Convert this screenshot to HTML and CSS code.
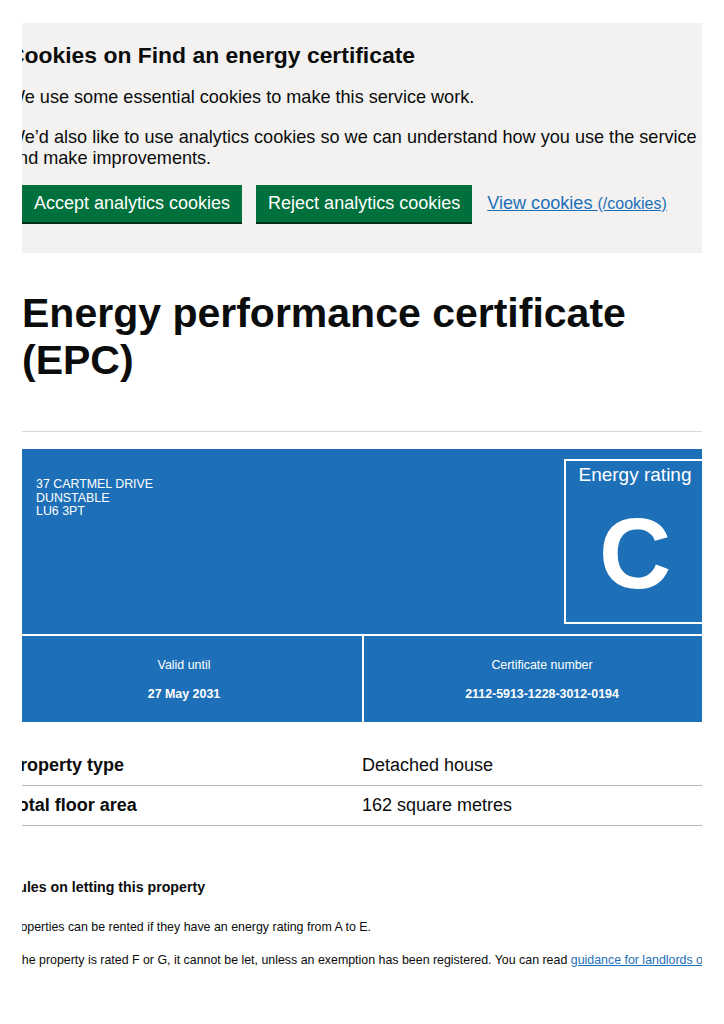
FILE: index.html
```html
<!DOCTYPE html>
<html lang="en">
<head>
<meta charset="utf-8">
<title>Energy performance certificate (EPC)</title>
<link rel="stylesheet" href="styles.css">
</head>
<body>
<div class="page">
  <div class="cookie-banner">
    <h2 class="cb-heading">Cookies on Find an energy certificate</h2>
    <p class="cb-text">We use some essential cookies to make this service work.</p>
    <p class="cb-text cb-text-last">We’d also like to use analytics cookies so we can understand how you use the service and make improvements.</p>
    <div class="cb-actions">
      <button class="btn" type="button">Accept analytics cookies</button>
      <button class="btn" type="button">Reject analytics cookies</button>
      <a class="cb-link" href="#">View cookies <span class="cb-link-small">(/cookies)</span></a>
    </div>
  </div>

  <main class="main">
    <h1 class="title">Energy performance certificate (EPC)</h1>
    <hr class="rule">

    <div class="epc">
      <div class="epc-top">
        <div class="epc-address">37 CARTMEL DRIVE<br>DUNSTABLE<br>LU6 3PT</div>
        <div class="epc-rating">
          <div class="epc-rating-label">Energy rating</div>
          <div class="epc-rating-letter">C</div>
        </div>
      </div>
      <div class="epc-cell">
        <div class="epc-cell-label">Valid until</div>
        <div class="epc-cell-value">27 May 2031</div>
      </div>
      <div class="epc-cell">
        <div class="epc-cell-label">Certificate number</div>
        <div class="epc-cell-value">2112-5913-1228-3012-0194</div>
      </div>
    </div>

    <dl class="summary">
      <div class="summary-row">
        <dt class="summary-key">Property type</dt>
        <dd class="summary-value">Detached house</dd>
      </div>
      <div class="summary-row">
        <dt class="summary-key">Total floor area</dt>
        <dd class="summary-value">162 square metres</dd>
      </div>
    </dl>

    <h2 class="rules-heading">Rules on letting this property</h2>
    <p class="rules-text">Properties can be rented if they have an energy rating from A to E.</p>
    <p class="rules-text rules-nowrap">If the property is rated F or G, it cannot be let, unless an exemption has been registered. You can read <a class="rules-link" href="#">guidance for landlords on the regulations and exemptions (opens in new tab)</a>.</p>
  </main>
</div>
</body>
</html>
```

FILE: styles.css
```css
html, body {
  margin: 0;
  padding: 0;
  background: #ffffff;
}

body {
  font-family: "Liberation Sans", Arial, sans-serif;
  color: #0b0c0c;
}

.page {
  width: 680px;
  margin: 23px 22px 0;
  overflow: hidden;
  padding-bottom: 40px;
}

/* Cookie banner */
.cookie-banner {
  background: #f3f2f1;
  padding: 19.5px 0 31px;
}

.cb-heading {
  margin: 0 0 19px -14px;
  font-size: 22.9px;
  line-height: 25px;
  font-weight: 700;
}

.cb-text {
  margin: 0 0 19px -14px;
  width: 708px;
  font-size: 18.1px;
  line-height: 21px;
}

.cb-text-last {
  margin-bottom: 16.5px;
}

.cb-actions {
  display: flex;
  align-items: center;
  gap: 14px;
  margin-top: 0;
}

.btn {
  font-family: "Liberation Sans", Arial, sans-serif;
  font-size: 18px;
  line-height: 19px;
  color: #ffffff;
  background: #00703c;
  border: 2px solid transparent;
  border-radius: 0;
  padding: 7px 10px 7px;
  box-shadow: 0 2px 0 #002d18;
  cursor: pointer;
  margin: 0;
}

.cb-link {
  margin-left: 1px;
  font-size: 18.1px;
  color: #1d70b8;
  text-decoration: underline;
}

.cb-link-small {
  font-size: 16px;
}

/* Main */
.main {
  padding-top: 37px;
}

.title {
  margin: 0;
  font-size: 41px;
  line-height: 47px;
  font-weight: 700;
}

.rule {
  margin: 47px 0 17px;
  border: 0;
  border-top: 1px solid #d8d8d8;
  height: 0;
}

/* EPC card */
.epc {
  margin-left: -16px;
  width: 714px;
  display: grid;
  grid-template-columns: 1fr 1fr;
  gap: 2px;
  background: #ffffff;
  color: #ffffff;
}

.epc-top {
  grid-column: 1 / 3;
  background: #1d70b8;
  height: 185px;
  display: flex;
  justify-content: space-between;
  align-items: flex-start;
}

.epc-address {
  padding: 29px 0 0 30px;
  font-size: 12.4px;
  line-height: 13.5px;
}

.epc-rating {
  box-sizing: border-box;
  width: 142px;
  height: 165px;
  margin: 10px 14px 0 0;
  border: 2px solid #ffffff;
  text-align: center;
}

.epc-rating-label {
  font-size: 19px;
  line-height: 22px;
  padding-top: 3px;
}

.epc-rating-letter {
  font-size: 100px;
  font-weight: 700;
  line-height: 100px;
  margin-top: 17px;
}

.epc-cell {
  background: #1d70b8;
  height: 86px;
  text-align: center;
  font-size: 12.4px;
  line-height: 14px;
}

.epc-cell-label {
  padding-top: 22px;
}

.epc-cell-value {
  margin-top: 15px;
  font-weight: 700;
}

/* Summary list */
.summary {
  margin: 24px 0 0 -14px;
  width: 710px;
  padding: 0;
}

.summary-row {
  display: grid;
  grid-template-columns: 354px 1fr;
  height: 39px;
  align-items: center;
  border-bottom: 1px solid #b1b4b6;
}

.summary-key {
  font-size: 18px;
  font-weight: 700;
  line-height: 21px;
  margin: 0;
}

.summary-value {
  font-size: 18px;
  line-height: 21px;
  margin: 0;
}

/* Rules */
.rules-heading {
  margin: 53px 0 0 -14px;
  font-size: 14.2px;
  line-height: 16px;
  font-weight: 700;
}

.rules-text {
  margin: 25px 0 0 -14px;
  font-size: 12.4px;
  line-height: 14px;
}

.rules-text + .rules-text {
  margin-top: 19px;
}

.rules-nowrap {
  white-space: nowrap;
}

.rules-link {
  color: #1d70b8;
  text-decoration: underline;
}
```
